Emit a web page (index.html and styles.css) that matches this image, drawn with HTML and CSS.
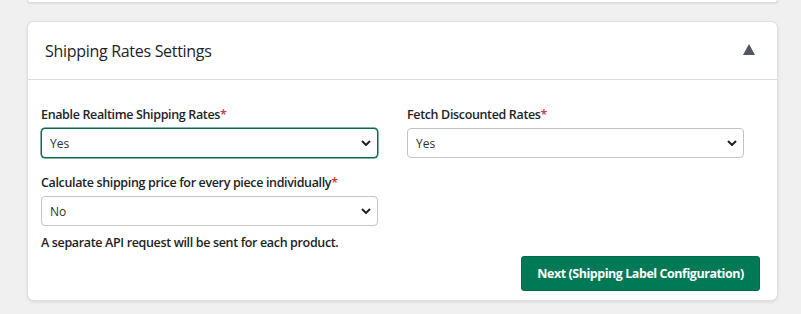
FILE: index.html
```html
<!DOCTYPE html>
<html>
<head>
<meta charset="utf-8">
<link rel="stylesheet" href="styles.css">
</head>
<body>
<div class="page">
  <div class="prev-card"></div>
  <section class="card">
    <header class="card-head">
      <h2 class="card-title">Shipping Rates Settings</h2>
      <span class="toggle" aria-hidden="true"></span>
    </header>
    <div class="card-body">
      <div class="grid">
        <div class="field">
          <label class="label">Enable Realtime Shipping Rates<span class="req">*</span></label>
          <div class="select-wrap">
            <select class="select focused"><option>Yes</option><option>No</option></select>
            <svg class="chev" width="10" height="6" viewBox="0 0 10 6"><path d="M1 1 L5 5 L9 1" fill="none" stroke="#1d2327" stroke-width="2"/></svg>
          </div>
        </div>
        <div class="field">
          <label class="label">Fetch Discounted Rates<span class="req">*</span></label>
          <div class="select-wrap">
            <select class="select"><option>Yes</option><option>No</option></select>
            <svg class="chev" width="10" height="6" viewBox="0 0 10 6"><path d="M1 1 L5 5 L9 1" fill="none" stroke="#1d2327" stroke-width="2"/></svg>
          </div>
        </div>
        <div class="field">
          <label class="label">Calculate shipping price for every piece individually<span class="req">*</span></label>
          <div class="select-wrap">
            <select class="select"><option>No</option><option>Yes</option></select>
            <svg class="chev" width="10" height="6" viewBox="0 0 10 6"><path d="M1 1 L5 5 L9 1" fill="none" stroke="#1d2327" stroke-width="2"/></svg>
          </div>
          <p class="help">A separate API request will be sent for each product.</p>
        </div>
      </div>
      <div class="actions">
        <button class="btn">Next (Shipping Label Configuration)</button>
      </div>
    </div>
  </section>
</div>
</body>
</html>
```
FILE: styles.css
```css
* { box-sizing: border-box; }
html, body { margin: 0; padding: 0; }
body {
  background: #f0f0f1;
  font-family: "Open Sans", "Noto Sans", sans-serif;
  color: #1d2327;
  width: 801px;
  height: 314px;
  overflow: hidden;
}
.page {
  padding-left: 27px;
  width: 778px;
}
.prev-card {
  height: 3px;
  background: #fff;
  border: 1px solid #dcdcde;
  border-top: none;
  border-radius: 0 0 6px 6px;
  box-shadow: 0 1px 2px rgba(0,0,0,0.08);
}
.card {
  margin-top: 18px;
  background: #fff;
  border: 1px solid #e0e0e2;
  border-radius: 7px;
  box-shadow: 0 1px 3px rgba(0,0,0,0.1);
}
.card-head {
  height: 58px;
  display: flex;
  align-items: center;
  justify-content: space-between;
  padding: 0 22px 0 17px;
  border-bottom: 1px solid #dcdcde;
}
.card-title {
  margin: 0;
  font-size: 16px;
  font-weight: 400;
  color: #1d2327;
  letter-spacing: -0.3px;
}
.toggle {
  width: 0; height: 0;
  border-left: 6.5px solid transparent;
  border-right: 6.5px solid transparent;
  border-bottom: 11px solid #50575e;
  margin-top: -2px;
}
.card-body {
  padding: 26px 17px 9px 13px;
}
.grid {
  display: grid;
  grid-template-columns: 337px 337px;
  column-gap: 29px;
  row-gap: 16px;
}
.label {
  display: block;
  font-size: 12.5px;
  font-weight: 600;
  line-height: 17px;
  color: #1d2327;
  margin-bottom: 5px;
  letter-spacing: -0.35px;
}
.req { color: #d63638; }
.select-wrap { position: relative; }
.select {
  -webkit-appearance: none;
  appearance: none;
  display: block;
  width: 100%;
  height: 30px;
  border: 1px solid #c3c4c7;
  border-radius: 4px;
  background: #fff;
  font-family: inherit;
  font-size: 12px;
  color: #2c3338;
  padding: 0 24px 0 8px;
  outline: none;
}
.select.focused {
  border: 1.5px solid #006b45;
  box-shadow: 0 0 0 0.5px #006b45;
}
.chev {
  position: absolute;
  right: 7px;
  top: 12px;
  pointer-events: none;
}
.help {
  margin: 8px 0 0;
  font-size: 12.5px;
  font-weight: 600;
  line-height: 17px;
  color: #1d2327;
  letter-spacing: -0.35px;
}
.actions {
  display: flex;
  justify-content: flex-end;
  margin-top: 5px;
}
.btn {
  width: 239px;
  height: 35px;
  background: #007a56;
  border: 1px solid #006b4b;
  border-radius: 3px;
  color: #fff;
  font-family: inherit;
  font-weight: 700;
  font-size: 12.5px;
  letter-spacing: -0.45px;
  cursor: pointer;
}
```
